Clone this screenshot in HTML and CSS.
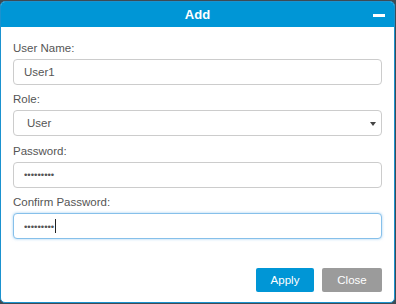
FILE: index.html
```html
<!DOCTYPE html>
<html lang="en">
<head>
    <meta charset="UTF-8">
    <title>Add User</title>
    <link rel="stylesheet" href="styles.css">
</head>
<body>
    <div class="dialog">
        <div class="dialog-header">
            <h2>Add</h2>
            <button class="minimize-button" title="Minimize"></button>
        </div>

        <form class="dialog-body">
            <div class="form-group">
                <label for="username">User Name:</label>
                <input id="username" class="form-control" type="text" value="User1">
            </div>
            <div class="form-group">
                <label for="role">Role:</label>
                <div class="select-wrap">
                    <select id="role" class="form-control">
                        <option>User</option>
                        <option>Administrator</option>
                    </select>
                </div>
            </div>
            <div class="form-group">
                <label for="password">Password:</label>
                <input id="password" class="form-control password" type="password" value="123456789">
            </div>
            <div class="form-group">
                <label for="confirm">Confirm Password:</label>
                <div class="caret-wrap">
                    <input id="confirm" class="form-control password focused" type="password" value="123456789">
                </div>
            </div>

            <div class="button-row">
                <button type="button" class="btn btn-primary">Apply</button>
                <button type="button" class="btn btn-default">Close</button>
            </div>
        </form>
    </div>
</body>
</html>
```

FILE: styles.css
```css
* {
    margin: 0;
    padding: 0;
    box-sizing: border-box;
    font-family: 'Liberation Sans', Arial, sans-serif;
}

body {
    background: #3d4b54;
    padding-top: 1px;
}

.dialog {
    width: 395px;
    height: 302px;
    background: #ffffff;
    border: 1px solid #1b92cf;
    border-radius: 5px;
    display: flex;
    flex-direction: column;
    overflow: hidden;
}

.dialog-header {
    height: 25px;
    background: #0096d6;
    display: flex;
    align-items: center;
    justify-content: center;
    position: relative;
}

.dialog-header h2 {
    color: #ffffff;
    font-size: 13px;
    font-weight: 700;
}

.minimize-button {
    position: absolute;
    right: 9px;
    top: 12px;
    width: 12px;
    height: 3px;
    background: #ffffff;
    border: none;
    cursor: pointer;
}

.dialog-body {
    flex: 1;
    display: flex;
    flex-direction: column;
    padding: 13px 12px 10px 12px;
}

.form-group {
    display: flex;
    flex-direction: column;
    margin-bottom: 6.4px;
}

.form-group label {
    font-size: 11.5px;
    line-height: 16px;
    color: #555555;
    margin-bottom: 3px;
}

.form-control {
    width: 100%;
    height: 26px;
    padding: 0 10px;
    font-size: 11.5px;
    color: #555555;
    background: #ffffff;
    border: 1px solid #cccccc;
    border-radius: 4px;
    outline: none;
}

.form-control.password {
    font-size: 9.6px;
    color: #555555;
}

.form-control.focused,
.form-control:focus {
    border-color: #86c0ea;
    box-shadow: 0 0 3px rgba(102, 175, 233, 0.6);
}

.select-wrap {
    position: relative;
}

.select-wrap select {
    appearance: none;
    -webkit-appearance: none;
    padding-left: 13px;
}

.select-wrap::after {
    content: '';
    position: absolute;
    right: 6px;
    top: 12px;
    border-left: 3px solid transparent;
    border-right: 3px solid transparent;
    border-top: 4px solid #444444;
    pointer-events: none;
}

.caret-wrap {
    position: relative;
}

.caret-wrap::after {
    content: '';
    position: absolute;
    left: 42px;
    top: 6px;
    width: 1px;
    height: 14px;
    background: #222222;
}

.button-row {
    margin-top: auto;
    display: flex;
    justify-content: flex-end;
    gap: 8px;
}

.btn {
    height: 24px;
    border: none;
    border-radius: 2px;
    color: #ffffff;
    font-size: 11.5px;
    cursor: pointer;
}

.btn-primary {
    width: 58px;
    background: #0096d6;
}

.btn-default {
    width: 60px;
    background: #9b9b9b;
}
```
